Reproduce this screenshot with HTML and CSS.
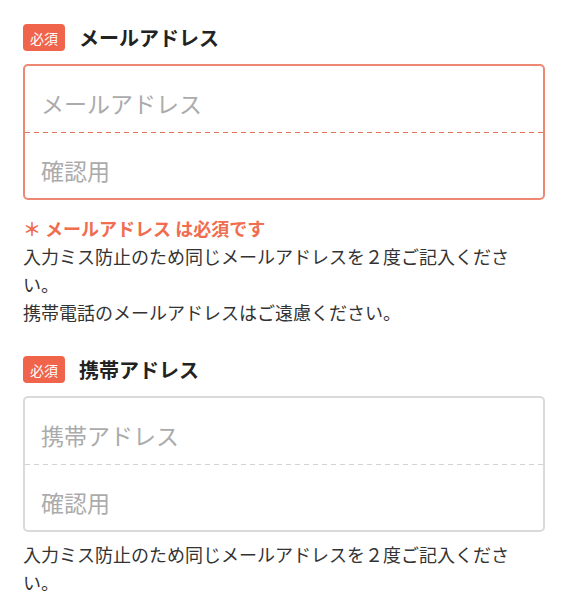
FILE: index.html
```html
<!DOCTYPE html>
<html lang="ja">
<head>
    <meta charset="UTF-8">
    <meta name="viewport" content="width=device-width, initial-scale=1.0">
    <title>メールアドレス入力</title>
    <link rel="stylesheet" href="styles.css">
</head>
<body>

    <div class="form">
        <!-- メールアドレス -->
        <section class="field">
            <div class="field-head">
                <span class="badge">必須</span>
                <span class="field-label">メールアドレス</span>
            </div>
            <div class="input-group is-error">
                <input type="email" class="input" placeholder="メールアドレス">
                <div class="divider"></div>
                <input type="email" class="input" placeholder="確認用">
            </div>
            <p class="error">＊ メールアドレス は必須です</p>
            <p class="note">入力ミス防止のため同じメールアドレスを２度ご記入ください。</p>
            <p class="note">携帯電話のメールアドレスはご遠慮ください。</p>
        </section>

        <!-- 携帯アドレス -->
        <section class="field">
            <div class="field-head">
                <span class="badge">必須</span>
                <span class="field-label">携帯アドレス</span>
            </div>
            <div class="input-group">
                <input type="email" class="input" placeholder="携帯アドレス">
                <div class="divider"></div>
                <input type="email" class="input" placeholder="確認用">
            </div>
            <p class="note note-tight">入力ミス防止のため同じメールアドレスを２度ご記入ください。</p>
        </section>
    </div>

</body>
</html>
```

FILE: styles.css
```css
/* Base */
body, html {
    margin: 0;
    padding: 0;
    background: #ffffff;
    color: #333333;
    font-family: "Noto Sans CJK JP", "Noto Sans", sans-serif;
}

.form {
    padding: 24px 24px 0 23px;
}

.field + .field {
    margin-top: 30px;
}

/* --- Header (badge + label) --- */
.field-head {
    display: flex;
    align-items: center;
    height: 27px;
    margin-bottom: 13px;
}

.badge {
    display: flex;
    align-items: center;
    justify-content: center;
    width: 42px;
    height: 27px;
    border-radius: 4px;
    background-color: #f0644b;
    color: #ffffff;
    font-size: 14px;
    line-height: 1;
}

.field-label {
    margin-left: 14px;
    font-size: 20px;
    font-weight: bold;
    color: #222222;
    line-height: 1;
}

/* --- Input box --- */
.input-group {
    display: flex;
    flex-direction: column;
    border: 2px solid #dadada;
    border-radius: 5px;
    overflow: hidden;
}

.input-group.is-error {
    border-color: #ee8873;
}

.input {
    display: block;
    width: 100%;
    height: 66px;
    margin: 0;
    padding: 8px 16px 0;
    border: none;
    outline: none;
    box-sizing: border-box;
    background: transparent;
    font-family: inherit;
    font-size: 23px;
    color: #333333;
}

.input:last-child {
    height: 65px;
}

.input::placeholder {
    color: #ababab;
}

.divider {
    height: 1px;
    background-image: repeating-linear-gradient(to right, #d2d2d2 0 5px, transparent 5px 9px);
}

.is-error .divider {
    background-image: repeating-linear-gradient(to right, #e4735e 0 5px, transparent 5px 9px);
}

/* --- Messages --- */
.error {
    margin: 14px 0 0;
    font-size: 18px;
    font-weight: bold;
    line-height: 28px;
    color: #f06d50;
}

.note {
    margin: 0;
    padding-right: 24px;
    font-size: 18px;
    line-height: 28px;
    color: #333333;
}

.note-tight {
    margin-top: 8px;
}
```
